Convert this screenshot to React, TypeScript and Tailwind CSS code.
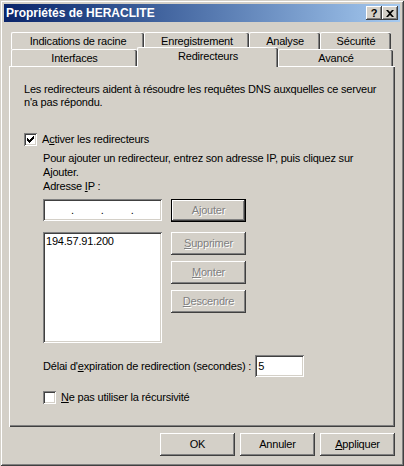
import React from 'react';

const raised =
  'bg-[#d4d0c8] shadow-[inset_-1px_-1px_0_#404040,inset_1px_1px_0_#ffffff,inset_-2px_-2px_0_#808080,inset_2px_2px_0_#d4d0c8]';
const sunken =
  'bg-white shadow-[inset_1px_1px_0_#808080,inset_-1px_-1px_0_#ffffff,inset_2px_2px_0_#404040,inset_-2px_-2px_0_#d4d0c8]';
const disabledText = 'text-[#808080] [text-shadow:1px_1px_0_#ffffff]';

function U({ children }: { children: React.ReactNode }) {
  return <span className="underline underline-offset-[1px]">{children}</span>;
}

function Checkbox({ checked }: { checked?: boolean }) {
  return (
    <div className={`flex h-[13px] w-[13px] shrink-0 items-center justify-center ${sunken}`}>
      {checked && (
        <svg width="7" height="7" viewBox="0 0 7 7">
          <path d="M0 2h1v1h1v1h1V3h1V2h1V1h1V0h1v3H6v1H5v1H4v1H3v1H2V6H1V5H0z" fill="#000" />
        </svg>
      )}
    </div>
  );
}

function Button({
  children,
  disabled,
  isDefault,
  className = '',
}: {
  children: React.ReactNode;
  disabled?: boolean;
  isDefault?: boolean;
  className?: string;
}) {
  if (isDefault) {
    return (
      <div className={`h-[23px] w-[75px] border border-black ${className}`}>
        <div
          className={`flex h-full w-full items-center justify-center bg-[#d4d0c8] shadow-[inset_-1px_-1px_0_#404040,inset_1px_1px_0_#ffffff,inset_-2px_-2px_0_#808080] ${
            disabled ? disabledText : ''
          }`}
        >
          {children}
        </div>
      </div>
    );
  }
  return (
    <div
      className={`flex h-[23px] w-[75px] items-center justify-center ${raised} ${
        disabled ? disabledText : ''
      } ${className}`}
    >
      {children}
    </div>
  );
}

const tabBase =
  'flex items-center justify-center border-l border-t border-white rounded-tl-[2px] rounded-tr-[2px] shadow-[inset_-1px_0_0_#404040,inset_-2px_0_0_#808080] bg-[#d4d0c8]';

export default function App() {
  return (
    <div className="flex h-[466px] w-[404px] flex-col bg-[#d4d0c8] p-[4px] font-['Liberation_Sans',Arial,sans-serif] text-[11px] leading-[13px] tracking-[-0.2px] text-black shadow-[inset_1px_1px_0_#d4d0c8,inset_-1px_-1px_0_#404040,inset_2px_2px_0_#ffffff,inset_-2px_-2px_0_#808080]">
      {/* title bar */}
      <div className="flex h-[18px] items-center justify-between bg-gradient-to-r from-[#0a246a] to-[#a6caf0] pl-[2px] pr-[2px]">
        <span className="text-[12px] font-bold tracking-normal text-white">Propriétés de HERACLITE</span>
        <div className="flex">
          <div className={`flex h-[14px] w-[16px] items-center justify-center text-[11px] font-bold leading-none ${raised}`}>
            ?
          </div>
          <div className={`flex h-[14px] w-[16px] items-center justify-center ${raised}`}>
            <svg width="8" height="7" viewBox="0 0 8 7">
              <path d="M0 0h2l2 2 2-2h2L5 3.5 8 7H6L4 5 2 7H0l3-3.5z" fill="#000" />
            </svg>
          </div>
        </div>
      </div>

      {/* tabs */}
      <div className="mt-[10px] ml-[5px] w-[386px]">
        <div className="flex h-[17px] pl-[2px]">
          <div className={`${tabBase} w-[133px]`}>Indications de racine</div>
          <div className={`${tabBase} w-[105px]`}>Enregistrement</div>
          <div className={`${tabBase} w-[71px]`}>Analyse</div>
          <div className={`${tabBase} w-[71px]`}>Sécurité</div>
        </div>
        <div className="flex h-[17px] items-end pl-[2px]">
          <div className={`${tabBase} h-[17px] w-[126px]`}>Interfaces</div>
          <div className={`${tabBase} relative z-10 -mb-[1px] h-[20px] w-[141px] items-start pt-[2px]`}>
            Redirecteurs
          </div>
          <div className={`${tabBase} h-[17px] w-[115px]`}>Avancé</div>
        </div>

        {/* panel */}
        <div className="h-[361px] border-l border-t border-white pl-[14px] pt-[16px] shadow-[inset_-1px_-1px_0_#404040,inset_-2px_-2px_0_#808080]">
          <p>
            Les redirecteurs aident à résoudre les requêtes DNS auxquelles ce serveur
            <br />
            n'a pas répondu.
          </p>

          <div className="mt-[24px] flex items-center gap-[5px]">
            <Checkbox checked />
            <span>
              A<U>c</U>tiver les redirecteurs
            </span>
          </div>

          <div className="pl-[19px]">
            <p className="mt-[5px] leading-[14px]">
              Pour ajouter un redirecteur, entrez son adresse IP, puis cliquez sur
              <br />
              Ajouter.
            </p>
            <p className="mt-[1px]">
              Adresse <U>I</U>P :
            </p>

            <div className="mt-[6px] flex items-start gap-[9px]">
              <div className={`flex h-[22px] w-[119px] items-center gap-[27px] pl-[28px] ${sunken}`}>
                <span>.</span>
                <span>.</span>
                <span>.</span>
              </div>
              <Button disabled isDefault>
                A<U>j</U>outer
              </Button>
            </div>

            <div className="mt-[10px] flex items-start gap-[9px]">
              <div className={`h-[111px] w-[119px] pl-[3px] pt-[3px] ${sunken}`}>194.57.91.200</div>
              <div className="flex flex-col gap-[6px]">
                <Button disabled>
                  <U>S</U>upprimer
                </Button>
                <Button disabled>
                  <U>M</U>onter
                </Button>
                <Button disabled>
                  <U>D</U>escendre
                </Button>
              </div>
            </div>

            <div className="mt-[12px] flex items-center gap-[4px]">
              <span>
                Délai d'<U>e</U>xpiration de redirection (secondes) :
              </span>
              <div className={`flex h-[22px] w-[49px] items-center pl-[3px] ${sunken}`}>5</div>
            </div>

            <div className="mt-[14px] flex items-center gap-[5px]">
              <Checkbox />
              <span>
                <U>N</U>e pas utiliser la récursivité
              </span>
            </div>
          </div>
        </div>
      </div>

      {/* bottom buttons */}
      <div className="mt-[6px] flex w-[391px] justify-end gap-[5px]">
        <Button>OK</Button>
        <Button>Annuler</Button>
        <Button>
          <U>A</U>ppliquer
        </Button>
      </div>
    </div>
  );
}
